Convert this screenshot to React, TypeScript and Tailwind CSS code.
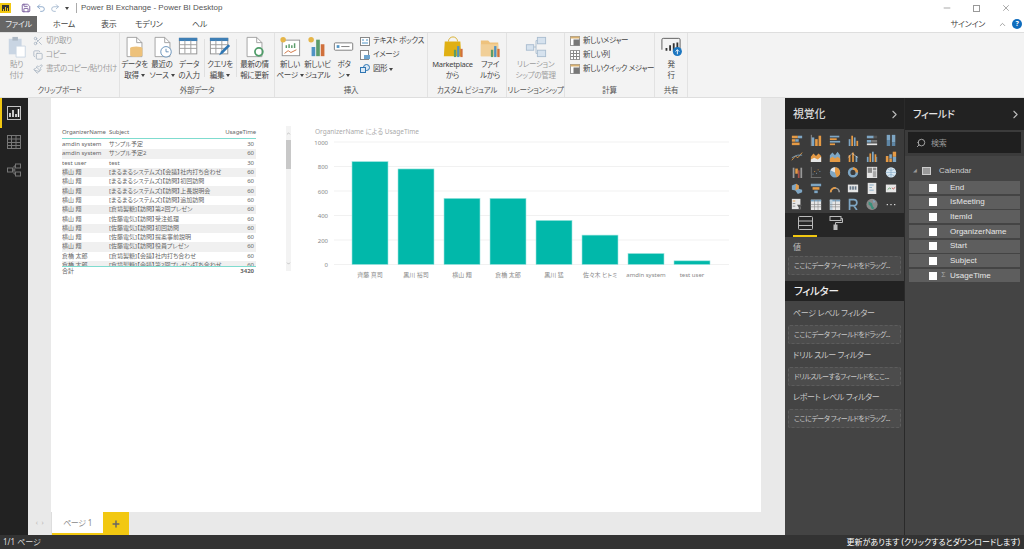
import type { ReactNode } from "react";
import { ChevronRight, ChevronUp, ChevronDown, Search, Minus, X, Plus, Scissors, Copy, Paintbrush, Save, Undo2, Redo2 } from "lucide-react";

const O = "#e59a45";
const B = "#7ea6c4";
const W = "#e6e6e6";

const rect = (x: number, y: number, w: number, h: number, fill: string) => (
  <rect key={`${x}-${y}-${w}-${h}`} x={x} y={y} width={w} height={h} fill={fill} />
);

const vizIcons: ReactNode[] = [
  <>{rect(1, 2, 7, 3, O)}{rect(8, 2, 5, 3, B)}{rect(1, 6, 4, 3, O)}{rect(5, 6, 4, 3, B)}{rect(1, 10, 9, 3, O)}</>,
  <>{rect(2, 4, 3, 10, B)}{rect(6, 6, 3, 8, O)}{rect(10, 2, 3, 12, O)}{rect(1, 1, 1, 13, "#999")}</>,
  <>{rect(1, 2, 11, 2, B)}{rect(1, 5, 8, 2, O)}{rect(1, 8, 12, 2, B)}{rect(1, 11, 6, 2, O)}</>,
  <>{rect(2, 6, 2, 8, B)}{rect(5, 2, 2, 12, O)}{rect(8, 4, 2, 10, B)}{rect(11, 8, 2, 6, O)}</>,
  <>{rect(1, 2, 8, 3, B)}{rect(9, 2, 4, 3, "#555")}{rect(1, 7, 5, 3, B)}{rect(6, 7, 7, 3, "#777")}{rect(1, 11, 12, 2, W)}</>,
  <>{rect(2, 1, 4, 6, B)}{rect(2, 7, 4, 7, "#5e86a5")}{rect(8, 1, 4, 9, B)}{rect(8, 10, 4, 4, "#5e86a5")}</>,
  <><path d="M1 12 5 7l3 2 5-6" fill="none" stroke={O} strokeWidth="1" /><path d="M1 9l4-2 3-1 5 0" fill="none" stroke={B} strokeWidth="1" /></>,
  <><path d="M1 14V8l3-4 3 3 3-3 3 3v7z" fill={O} /><path d="M1 14v-3l4-2 4 2 4-3v6z" fill={W} /></>,
  <><path d="M1 14V6l3-3 3 3 3-4 3 4v8z" fill={B} /><path d="M1 10l3-2 3 2 3-2 3 2v4H1z" fill={O} /></>,
  <>{rect(2, 6, 2, 8, O)}{rect(6, 3, 2, 11, O)}{rect(10, 7, 2, 7, B)}<path d="M1 9 6 4l7 5" fill="none" stroke={W} strokeWidth=".6" /></>,
  <>{rect(1, 8, 2, 6, B)}{rect(4, 4, 2, 10, O)}{rect(7, 2, 2, 12, B)}{rect(10, 5, 2, 9, O)}{rect(12, 8, 1, 6, B)}</>,
  <>{rect(1, 7, 3, 7, O)}{rect(5, 5, 3, 5, B)}{rect(5, 10, 3, 4, O)}{rect(9, 2, 4, 6, O)}{rect(9, 8, 4, 6, B)}</>,
  <>{rect(2, 2, 2, 12, "#999")}{rect(5, 3, 3, 6, O)}{rect(8, 5, 2, 9, "#a9534a")}{rect(11, 2, 2, 12, "#999")}</>,
  <>{rect(3, 9, 1, 1, B)}{rect(5, 6, 1, 1, O)}{rect(7, 8, 1, 1, B)}{rect(9, 4, 1, 1, O)}{rect(11, 6, 1, 1, B)}{rect(1, 1, 1, 13, "#777")}{rect(1, 13, 12, 1, "#777")}</>,
  <><circle cx="7" cy="7.5" r="6" fill={B} /><path d="M7 7.5V1.5a6 6 0 0 1 2 11.6z" fill={O} /><path d="M7 7.5 1.6 5A6 6 0 0 1 7 1.5z" fill={W} /></>,
  <><circle cx="7" cy="7.5" r="4.5" fill="none" stroke={B} strokeWidth="3" /><path d="M7 3a4.5 4.5 0 0 1 4.5 4.5" fill="none" stroke={O} strokeWidth="3" /></>,
  <>{rect(1, 1, 12, 13, W)}{rect(2, 2, 5, 6, "#8a8a8a")}{rect(8, 2, 4, 3, "#8a8a8a")}{rect(8, 6, 4, 7, "#a9a9a9")}</>,
  <><circle cx="7" cy="7.5" r="6" fill="#dbe9f2" /><path d="M1 7.5h12M7 1.5v12M3 3.5c3 2 5 2 8 0M3 11.5c3-2 5-2 8 0" stroke={B} fill="none" strokeWidth=".7" /></>,
  <><path d="M1 4 6 2l3 2v4l4 1v3l-5 2-3-4-4-1z" fill={B} /><path d="M6 2l3 2v4L5 10z" fill={O} /></>,
  <>{rect(1, 2, 12, 3, B)}{rect(3, 6, 8, 3, O)}{rect(5, 10, 4, 3, B)}</>,
  <><path d="M2 12a5 5 0 0 1 10 0" fill="none" stroke="#999" strokeWidth="2" /><path d="M2 12a5 5 0 0 1 6-5" fill="none" stroke={O} strokeWidth="2" /></>,
  <>{rect(1, 3, 12, 9, W)}{rect(3, 5, 2, 4, "#678")}{rect(6, 5, 2, 4, "#678")}{rect(9, 5, 2, 4, "#678")}</>,
  <>{rect(2, 1, 10, 13, W)}{rect(4, 3, 5, 1, B)}{rect(4, 6, 3, 1, B)}{rect(4, 9, 5, 1, B)}</>,
  <>{rect(1, 3, 12, 9, W)}<path d="M3 9l2-2 2 1" stroke="#5aa469" fill="none" /><path d="M8 7l2 1 2-2" stroke="#c0504d" fill="none" /></>,
  <>{rect(1, 1, 10, 12, W)}{rect(2, 3, 3, 1, O)}{rect(2, 6, 3, 1, "#888")}{rect(2, 9, 3, 1, "#888")}<path d="M7 8h6l-2 3v3H9v-3z" fill="#555" /></>,
  <>{rect(1, 2, 12, 12, W)}{rect(1, 2, 12, 2, B)}{rect(5, 2, 0.7, 12, "#888")}{rect(9, 2, 0.7, 12, "#888")}{rect(1, 7, 12, 0.7, "#888")}{rect(1, 10, 12, 0.7, "#888")}</>,
  <>{rect(1, 2, 12, 12, W)}{rect(1, 2, 12, 2, B)}{rect(1, 2, 3, 12, "#b9cddb")}{rect(7, 2, 0.7, 12, "#888")}{rect(1, 7, 12, 0.7, "#888")}{rect(1, 10, 12, 0.7, "#888")}</>,
  <path d="M3 14V2h5a3.5 3.5 0 0 1 0 7H3m5 0 3.5 5" fill="none" stroke={B} strokeWidth="2" />,
  <><circle cx="7" cy="7.5" r="6.5" fill="#8a8a8a" /><path d="M3 4l4 2 1 4 2 2-3 1-2-4-2-1z" fill="#3a8f7b" /><path d="M8 2l3 2-2 2z" fill={B} /></>,
  <>{rect(2, 7, 1.4, 1.4, W)}{rect(6.3, 7, 1.4, 1.4, W)}{rect(10.6, 7, 1.4, 1.4, W)}</>,
];

const rows = [
  ["amdin system", "サンプル予定", "30"],
  ["amdin system", "サンプル予定2", "60"],
  ["test user", "test", "30"],
  ["横山 翔", "[まるまるシステムズ]【会議】社内打ち合わせ", "60"],
  ["横山 翔", "[まるまるシステムズ]【訪問】初回訪問", "60"],
  ["横山 翔", "[まるまるシステムズ]【訪問】上長説明会", "60"],
  ["横山 翔", "[まるまるシステムズ]【訪問】追加訪問", "60"],
  ["横山 翔", "[倉境製糖]【訪問】第2回プレゼン", "60"],
  ["横山 翔", "[佐藤電気]【訪問】受注処理", "60"],
  ["横山 翔", "[佐藤電気]【訪問】初回訪問", "60"],
  ["横山 翔", "[佐藤電気]【訪問】提案事前説明", "60"],
  ["横山 翔", "[佐藤電気]【訪問】役員プレゼン", "60"],
  ["倉橋 太郎", "[倉境製糖]【会議】社内打ち合わせ", "60"],
  ["倉橋 太郎", "[倉境製糖]【会議】第2回プレゼン打ち合わせ", "60"],
];

const bars = [
  ["齊藤 真司", 840],
  ["黒川 裕司", 780],
  ["横山 翔", 540],
  ["倉橋 太郎", 540],
  ["黒川 猛", 360],
  ["佐々木 ヒトミ", 240],
  ["amdin system", 90],
  ["test user", 30],
] as const;

const fields = ["End", "IsMeeting", "ItemId", "OrganizerName", "Start", "Subject", "UsageTime"];

function Doc({ children }: { children?: ReactNode }) {
  return (
    <svg width="21" height="22" viewBox="0 0 24 25" fill="none">
      <path d="M3.5 1.5h11l6 6v16h-17z" fill="#fff" stroke="#9a9a9a" />
      <path d="M14.5 1.5v6h6" stroke="#9a9a9a" />
      {children}
    </svg>
  );
}

function GridIcon({ pen }: { pen?: boolean }) {
  return (
    <svg width="22" height="22" viewBox="0 0 24 24" fill="none">
      <rect x="1.5" y="2.5" width="19" height="17" fill="#fff" stroke="#8f8f8f" />
      <rect x="1" y="2" width="20" height="3.5" fill="#3f7fb5" />
      <path d="M1.5 9.5h19M1.5 13.5h19M7.5 5v14M14 5v14" stroke="#9a9a9a" />
      {pen && <path d="M11 21l2-4 8-8 2 2-8 8z" fill="#2f76b3" />}
    </svg>
  );
}

function NewPageIcon() {
  return (
    <svg width="22" height="22" viewBox="0 0 24 24" fill="none">
      <rect x="3.5" y="4.5" width="19" height="17" fill="#fff" stroke="#8f8f8f" />
      <circle cx="4.5" cy="4" r="3" fill="#e5b548" />
      <path d="M8 10v3M11 9v4M14 10v3M17 8v5" stroke="#5b9c6b" strokeWidth="1.6" />
      <path d="M6 19l4-3 3 2 6-3" stroke="#d0703c" />
    </svg>
  );
}

function NewVisualIcon() {
  return (
    <svg width="22" height="22" viewBox="0 0 24 24">
      <circle cx="4.5" cy="4" r="3" fill="#e5b548" />
      <rect x="5" y="12" width="4" height="10" fill="#4f93c4" />
      <rect x="10" y="4" width="4" height="18" fill="#5b9c6b" />
      <rect x="15" y="9" width="4" height="13" fill="#d0703c" />
    </svg>
  );
}

function FolderIcon({ market }: { market?: boolean }) {
  return (
    <svg width="22" height="22" viewBox="0 0 24 24">
      {market ? (
        <>
          <path d="M7 6a5 5 0 0 1 10 0" fill="none" stroke="#d8ae2a" />
          <path d="M3 6h17l1 16H2z" fill="#e0b013" />
        </>
      ) : (
        <>
          <path d="M2 5h8l2 2h9v15H2z" fill="#eec27d" />
          <path d="M2 9h19v13H2z" fill="#f1cf97" />
        </>
      )}
      <rect x="13" y="15" width="2.5" height="8" fill="#5b9c6b" />
      <rect x="16.5" y="11" width="2.5" height="12" fill="#4f93c4" />
      <rect x="20" y="14" width="2.5" height="9" fill="#d0703c" />
    </svg>
  );
}

function MeasureIcon({ table }: { table?: boolean }) {
  return (
    <svg width="10" height="10" viewBox="0 0 10 10" fill="none">
      <rect x=".5" y=".5" width="9" height="9" fill="#fff" stroke="#999" />
      {table ? (
        <path d="M.5 3.5h9M.5 6.5h9M3.5 .5v9M6.5 .5v9" stroke="#888" />
      ) : (
        <>
          <rect x=".5" y=".5" width="9" height="2" fill="#d9b272" />
          <rect x="3.5" y="3.5" width="6" height="6" fill="#777" />
        </>
      )}
    </svg>
  );
}

function BigButton({ icon, label, w, dim }: { icon: ReactNode; label: ReactNode; w: string; dim?: boolean }) {
  return (
    <div className={`flex flex-col items-center shrink-0 pt-[3px] ${w} ${dim ? "text-[#9c9c9c]" : "text-[#444]"}`}>
      <div className="h-[22px] flex items-center justify-center">{icon}</div>
      <div className="mt-[1px] text-center leading-[11px] whitespace-pre">{label}</div>
    </div>
  );
}

function Small({ icon, label, dim }: { icon: ReactNode; label: string; dim?: boolean }) {
  return (
    <div className={`h-[14px] flex items-center gap-[3px] whitespace-nowrap tracking-[-0.4px] ${dim ? "text-[#9c9c9c]" : "text-[#444]"}`}>
      {icon}
      {label}
    </div>
  );
}

function Group({ label, w, children }: { label: string; w: string; children: ReactNode }) {
  return (
    <div className={`${w} shrink-0 flex flex-col border-r border-[#e2e2e2]`}>
      <div className="h-[52px] flex items-start">{children}</div>
      <div className="h-[13px] text-center text-[#555] leading-[13px]">{label}</div>
    </div>
  );
}

function DropSlot({ label }: { label: string }) {
  return (
    <div className="mx-[3px] h-[19px] rounded-[2px] border border-dashed border-[#5c5c5c] bg-[#4c4c4c] px-[5px] text-[7px] tracking-[-0.5px] leading-[17px] text-[#c8c8c8] whitespace-nowrap">
      {label}
    </div>
  );
}

const Caret = () => <span className="inline-block ml-[2px] align-middle border-x-[2px] border-t-[3px] border-x-transparent border-t-[#444]" />;

export default function App() {
  return (
    <div className="w-[1024px] h-[549px] overflow-hidden flex flex-col bg-white font-['Noto_Sans','Noto_Sans_CJK_JP',sans-serif] [font-feature-settings:'palt'] text-[7.5px] tracking-[-0.3px]">
      {/* title bar */}
      <div className="h-[16px] shrink-0 flex items-center text-[#444]">
        <div className="w-[11px] h-[10px] bg-[#f2c811] flex items-center justify-center">
          <div className="w-[7px] h-[6px] bg-[#333] flex items-end justify-center gap-[1px]">
            <span className="w-[1px] h-[2px] bg-[#f2c811]" />
            <span className="w-[1px] h-[4px] bg-[#f2c811]" />
            <span className="w-[1px] h-[3px] bg-[#f2c811]" />
          </div>
        </div>
        <Save size={10} className="ml-[10px] text-[#6a4c93]" />
        <Undo2 size={10} className="ml-[5px] text-[#7f9fc4]" />
        <Redo2 size={10} className="ml-[4px] text-[#9fb4cc]" />
        <span className="ml-[5px] inline-block border-x-[2px] border-t-[3px] border-x-transparent border-t-[#444]" />
        <span className="ml-[7px] w-px h-[10px] bg-[#aaa]" />
        <span className="ml-[4px] text-[8px] tracking-normal font-['Liberation_Sans'] text-[#555]">Power BI Exchange - Power BI Desktop</span>
        <div className="ml-auto flex items-center gap-[21px] pr-[13px] text-[#999]">
          <Minus size={10} />
          <div className="w-[7px] h-[7px] border border-[#999]" />
          <X size={10} />
        </div>
      </div>
      {/* tabs */}
      <div className="h-[16px] shrink-0 flex items-stretch text-[8px] text-[#444] leading-[16px]">
        <div className="w-[37px] bg-[#666] text-[#eee] text-center">ファイル</div>
        <div className="w-[54px] bg-white text-center">ホーム</div>
        <div className="ml-[10px] w-[16px]">表示</div>
        <div className="ml-[18px] w-[32px]">モデリング</div>
        <div className="ml-[25px] w-[22px]">ヘルプ</div>
        <div className="ml-auto flex items-center pr-[2px]">
          <span className="text-[8px]">サインイン</span>
          <ChevronUp size={9} className="text-[#888] ml-[13px]" />
          <span className="ml-[5px] w-[10px] h-[10px] rounded-full bg-[#0f6cbd] text-white text-[7px] font-bold leading-[10px] text-center">?</span>
        </div>
      </div>
      {/* ribbon */}
      <div className="h-[66px] shrink-0 flex bg-[#f3f3f3] border-y border-[#dedede]">
        <Group label="クリップボード" w="w-[120px]">
          <BigButton
            w="w-[33px]"
            dim
            label={"貼り\n付け"}
            icon={
              <svg width="20" height="22" viewBox="0 0 20 24">
                <rect x="1" y="3" width="14" height="17" fill="#c9d5e3" />
                <rect x="5" y="1" width="6" height="4" fill="#aeb9c5" />
                <path d="M9 11h10v12H9z" fill="#fff" stroke="#c9d5e3" />
              </svg>
            }
          />
          <div className="pt-[1px] flex flex-col">
            <Small dim label="切り取り" icon={<Scissors size={10} className="text-[#a8b4c2]" />} />
            <Small dim label="コピー" icon={<Copy size={10} className="text-[#a8b4c2]" />} />
            <Small dim label="書式のコピー/貼り付け" icon={<Paintbrush size={10} className="text-[#a8b4c2]" />} />
          </div>
        </Group>
        <Group label="外部データ" w="w-[155px]">
          <BigButton
            w="w-[29px]"
            label={<>{"データを\n取得"}<Caret /></>}
            icon={
              <Doc>
                <ellipse cx="14" cy="14" rx="7" ry="2" fill="#edc17a" />
                <path d="M7 14v8c0 2.5 14 2.5 14 0v-8z" fill="#edc17a" />
              </Doc>
            }
          />
          <BigButton
            w="w-[26px]"
            label={<>{"最近の\nソース"}<Caret /></>}
            icon={
              <Doc>
                <circle cx="16" cy="18" r="6" fill="#fff" stroke="#5b89b3" />
                <path d="M16 14.5V18h3" stroke="#5b89b3" />
              </Doc>
            }
          />
          <BigButton w="w-[28px]" label={"データ\nの入力"} icon={<GridIcon />} />
          <div className="w-px h-[38px] bg-[#e0e0e0] mt-[6px] ml-[1px]" />
          <BigButton w="w-[30px]" label={<>{"クエリを\n編集"}<Caret /></>} icon={<GridIcon pen />} />
          <div className="w-px h-[38px] bg-[#e0e0e0] mt-[6px] ml-[1px]" />
          <BigButton
            w="w-[35px]"
            label={"最新の情\n報に更新"}
            icon={
              <Doc>
                <circle cx="17" cy="18" r="4.5" fill="none" stroke="#4f9d69" strokeWidth="2" />
              </Doc>
            }
          />
        </Group>
        <Group label="挿入" w="w-[153px]">
          <BigButton w="w-[30px]" label={<>{"新しい\nページ"}<Caret /></>} icon={<NewPageIcon />} />
          <BigButton w="w-[25px]" label={"新しいビ\nジュアル"} icon={<NewVisualIcon />} />
          <BigButton
            w="w-[28px]"
            label={<>{"ボタ\nン"}<Caret /></>}
            icon={
              <svg width="22" height="18" viewBox="0 0 24 18">
                <rect x="1.5" y="4.5" width="20" height="8" rx="1" fill="#fff" stroke="#777" />
                <rect x="4" y="7" width="3" height="3" fill="#4f93c4" />
                <path d="M9 8.5h9" stroke="#777" />
              </svg>
            }
          />
          <div className="pl-[2px] pt-[1px] flex flex-col">
            <Small
              label="テキスト ボックス"
              icon={
                <svg width="10" height="9" viewBox="0 0 10 9" fill="none">
                  <rect x=".5" y=".5" width="9" height="8" fill="#fff" stroke="#888" />
                  <path d="M2 3h2M6 3h2M2 6h6" stroke="#4f93c4" />
                </svg>
              }
            />
            <Small
              label="イメージ"
              icon={
                <svg width="10" height="10" viewBox="0 0 10 10" fill="none">
                  <rect x=".5" y=".5" width="8" height="9" fill="#fff" stroke="#888" />
                  <rect x="4" y="5" width="6" height="4" fill="#6fa5cf" />
                </svg>
              }
            />
            <div className="flex items-center">
              <Small
                label="図形"
                icon={
                  <svg width="10" height="10" viewBox="0 0 10 10" fill="#dbe9f5" stroke="#2f76b3">
                    <circle cx="6.5" cy="3.5" r="3" />
                    <rect x=".5" y="3.5" width="5" height="5" />
                  </svg>
                }
              />
              <Caret />
            </div>
          </div>
        </Group>
        <Group label="カスタム ビジュアル" w="w-[79px]">
          <BigButton w="w-[49px]" label={"Marketplace\nから"} icon={<FolderIcon market />} />
          <BigButton w="w-[26px]" label={"ファイ\nルから"} icon={<FolderIcon />} />
        </Group>
        <Group label="リレーションシップ" w="w-[58px]">
          <BigButton
            w="w-full"
            dim
            label={"リレーション\nシップの管理"}
            icon={
              <svg width="22" height="22" viewBox="0 0 24 24" fill="#d6e2ee" stroke="#a9bccf">
                <rect x="1.5" y="9.5" width="8" height="6" />
                <rect x="13.5" y="1.5" width="9" height="7" />
                <rect x="13.5" y="15.5" width="9" height="7" />
                <path d="M9.5 12H12V5h1.5M12 12v7h1.5" fill="none" />
              </svg>
            }
          />
        </Group>
        <Group label="計算" w="w-[90px]">
          <div className="pl-[5px] pt-[1px] flex flex-col">
            <Small label="新しいメジャー" icon={<MeasureIcon />} />
            <Small label="新しい列" icon={<MeasureIcon table />} />
            <Small label="新しいクイック メジャー" icon={<MeasureIcon />} />
          </div>
        </Group>
        <Group label="共有" w="w-[33px]">
          <BigButton
            w="w-full"
            label={"発\n行"}
            icon={
              <svg width="22" height="20" viewBox="0 0 24 22" fill="none">
                <path d="M2 14V3a1.5 1.5 0 0 1 1.5-1.5h17A1.5 1.5 0 0 1 22 3v10" stroke="#555" />
                <path d="M7 15v-3M11 15V9M15 15V7M19 13V6" stroke="#333" strokeWidth="2" />
                <circle cx="19" cy="16" r="5" fill="#1c76c0" />
                <path d="M19 19v-5M17 16l2-2 2 2" stroke="#fff" />
              </svg>
            }
          />
        </Group>
      </div>

      {/* body */}
      <div className="flex-1 min-h-0 flex">
        <div className="w-[28px] shrink-0 bg-[#222] flex flex-col">
          <div className="h-[30px] border-l-[2px] border-[#f2c811] flex items-center justify-center pr-[2px]">
            <svg width="14" height="14" viewBox="0 0 14 14" fill="none">
              <rect x=".5" y=".5" width="13" height="13" stroke="#c4c4c4" />
              <path d="M3 11V7M6 11V4M9 11V8M11.5 11V3" stroke="#fff" strokeWidth="1.5" />
            </svg>
          </div>
          <div className="h-[28px] flex items-center justify-center">
            <svg width="14" height="14" viewBox="0 0 14 14" fill="none" stroke="#777">
              <rect x=".5" y=".5" width="13" height="13" />
              <path d="M.5 4h13M.5 7.5h13M.5 10.5h13M4.5 .5v13M9 .5v13" />
            </svg>
          </div>
          <div className="h-[28px] flex items-center justify-center">
            <svg width="14" height="14" viewBox="0 0 14 14" fill="none" stroke="#777">
              <rect x=".5" y="5" width="5" height="4" />
              <rect x="8.5" y="1" width="5" height="4" />
              <rect x="8.5" y="9" width="5" height="4" />
              <path d="M5.5 7h3M7 3h1.5M7 11h1.5M7 3v8" />
            </svg>
          </div>
        </div>

        <div className="w-[757px] shrink-0 flex flex-col bg-[#e9e9e9]">
          <div className="flex-1 min-h-0 pl-[23px] pr-[24px]">
            <div className="h-full bg-white flex pl-[11px] pt-[28px] tracking-normal">
              {/* table */}
              <div className="w-[229px] shrink-0 flex">
                <div className="w-[194px] shrink-0 text-[6px] text-[#666]">
                  <div className="flex h-[13px] items-center border-b border-[#7fdccf] tracking-[-0.1px]">
                    <span className="w-[47px]">OrganizerName</span>
                    <span className="flex-1">Subject</span>
                    <span>UsageTime</span>
                  </div>
                  <div className="h-[127px] overflow-hidden pt-[1px]">
                    {rows.map((r, i) => (
                      <div key={i} className={`flex h-[9.3px] items-center leading-[9px] ${i % 2 === 1 ? "bg-[#f0f0f0]" : ""}`}>
                        <span className="w-[47px] shrink-0">{r[0]}</span>
                        <span className="flex-1 whitespace-nowrap">{r[1]}</span>
                        <span className="pr-[2px]">{r[2]}</span>
                      </div>
                    ))}
                  </div>
                  <div className="flex h-[10px] items-center border-t border-[#7fdccf] font-bold pr-[2px]">
                    <span className="flex-1 font-normal">合計</span>
                    <span>3420</span>
                  </div>
                </div>
                <div className="ml-[30px] w-[5px] h-[145px] bg-[#f3f3f3] flex flex-col justify-between items-center text-[#888]">
                  <div className="w-full flex flex-col items-center">
                    <ChevronUp size={5} className="mt-[5px]" />
                    <div className="bg-[#c8c8c8] w-full h-[29px] mt-[4px]" />
                  </div>
                  <ChevronDown size={5} className="mb-[5px]" />
                </div>
              </div>
              {/* chart */}
              <div className="ml-[21px]">
                <svg width="425" height="165" viewBox="0 0 425 165" className="block">
                  <text x="3" y="8" fontSize="6.5" fill="#aaa">OrganizerName による UsageTime</text>
                  {[0, 200, 400, 600, 800, 1000].map((v) => {
                    const y = 138.5 - v * 0.1225;
                    return (
                      <g key={v}>
                        <line x1="22" x2="417" y1={y} y2={y} stroke="#f1f1f1" />
                        <text x="16" y={y + 2.5} fontSize="6" fill="#888" textAnchor="end">{v}</text>
                      </g>
                    );
                  })}
                  {bars.map(([name, v], i) => (
                    <g key={name}>
                      <rect x={40 + i * 46} y={138.5 - v * 0.1225} width="36" height={v * 0.1225} fill="#01b8aa" stroke="#9fe5df" strokeWidth=".6" />
                      <text x={58 + i * 46} y="150.5" fontSize="6" fill="#888" textAnchor="middle">{name}</text>
                    </g>
                  ))}
                </svg>
              </div>
            </div>
          </div>
          <div className="h-[23px] shrink-0 flex">
            <div className="w-[24px] flex items-center justify-center gap-[4px] text-[7px] text-[#bbb] border-r border-[#ddd]">
              <span>‹</span>
              <span>›</span>
            </div>
            <div className="w-[51px] bg-white border-b-[2px] border-[#f2c811] text-center text-[8px] leading-[21px] text-[#888]">ページ 1</div>
            <div className="w-[26px] flex items-center justify-center bg-[#f2c811]">
              <Plus size={10} strokeWidth={3.5} className="text-[#666]" />
            </div>
          </div>
        </div>

        {/* visualizations */}
        <div className="w-[120px] shrink-0 flex flex-col bg-[#444] border-r border-[#2a2a2a]">
          <div className="h-[31px] shrink-0 bg-[#222] flex items-center justify-between pl-[8px] pr-[3px] pt-[1px] text-[11px] font-medium text-[#d8d8d8]">
            <span>視覚化</span>
            <ChevronRight size={13} className="text-[#bbb]" />
          </div>
          <div className="h-[84px] shrink-0 bg-[#3b3b3b] grid grid-cols-[repeat(6,18.7px)] auto-rows-[16px] pl-[3px] pt-[3px]">
            {vizIcons.map((icon, i) => (
              <div key={i} className="flex items-center justify-center">
                <svg width="12" height="12" viewBox="0 0 14 14" className="block">
                  {icon}
                </svg>
              </div>
            ))}
          </div>
          <div className="h-[24px] shrink-0 bg-[#262626] flex pl-[8px] gap-[12px]">
            <div className="w-[24px] border-b-[2px] border-[#f2c811] flex justify-center pt-[3px]">
              <svg width="15" height="14" viewBox="0 0 15 14" fill="none" stroke="#bbb">
                <rect x=".5" y=".5" width="14" height="13" rx="1" />
                <path d="M.5 5h14M.5 9.5h14" />
              </svg>
            </div>
            <div className="pt-[3px]">
              <svg width="14" height="14" viewBox="0 0 14 14" fill="none" stroke="#bbb">
                <rect x="1" y=".5" width="11" height="4" />
                <path d="M12 2.5h1.5v4H6.5V9" />
                <rect x="5" y="9" width="3" height="5" fill="#bbb" />
              </svg>
            </div>
          </div>
          <div className="h-[44px] shrink-0 pt-[3px]">
            <div className="pl-[8px] text-[8px] text-[#bdbdbd] h-[14px] leading-[14px] mb-[1.5px]">値</div>
            <DropSlot label="ここにデータ フィールドをドラッグ..." />
          </div>
          <div className="h-[20px] shrink-0 bg-[#222] pl-[9px] text-[10.5px] font-medium leading-[20px] text-[#eee]">フィルター</div>
          <div className="pt-[5px] flex flex-col">
            <div className="pl-[8px] h-[14px] text-[8px] leading-[14px] text-[#c8c8c8] mb-[4.5px]">ページ レベル フィルター</div>
            <DropSlot label="ここにデータ フィールドをドラッグ..." />
            <div className="pl-[8px] h-[14px] text-[8px] leading-[14px] text-[#c8c8c8] mt-[4.5px] mb-[4.5px]">ドリル スルー フィルター</div>
            <DropSlot label="ドリルスルーするフィールドをここ..." />
            <div className="pl-[8px] h-[14px] text-[8px] leading-[14px] text-[#c8c8c8] mt-[4.5px] mb-[4.5px]">レポート レベル フィルター</div>
            <DropSlot label="ここにデータ フィールドをドラッグ..." />
          </div>
        </div>

        {/* fields */}
        <div className="flex-1 min-w-0 flex flex-col bg-[#444]">
          <div className="h-[32px] shrink-0 bg-[#222] flex items-center justify-between pl-[8px] pr-[2px] pt-[1px] text-[10px] font-medium text-[#e4e4e4]">
            <span>フィールド</span>
            <ChevronRight size={13} className="text-[#bbb]" />
          </div>
          <div className="h-[26px] shrink-0 bg-[#3b3b3b] px-[3px] pt-[2px]">
            <div className="h-[21px] bg-[#1f1f1f] flex items-center gap-[5px] pl-[8px] text-[8px] text-[#999]">
              <Search size={10} className="-scale-x-100 text-[#bbb]" />
              検索
            </div>
          </div>
          <div className="flex items-center h-[25px] pt-[5px] pl-[8px] text-[8px] tracking-normal text-[#ccc] font-['Liberation_Sans']">
            <span className="text-[5px] text-[#999]">◢</span>
            <span className="ml-[5px] w-[9px] h-[8px] border border-[#ccc] bg-[#999] block" />
            <span className="ml-[8px]">Calendar</span>
          </div>
          <div className="flex flex-col gap-[1.7px] px-[4px]">
            {fields.map((f) => (
              <div key={f} className="h-[13px] bg-[#5e5e5e] flex items-center text-[8px] tracking-normal text-[#e6e6e6] font-['Liberation_Sans']">
                <span className="ml-[20px] w-[8px] h-[8px] bg-white shrink-0" />
                <span className="w-[13px] text-center text-[7px] text-[#aaa] shrink-0">{f === "UsageTime" ? "Σ" : ""}</span>
                {f}
              </div>
            ))}
          </div>
        </div>
      </div>

      {/* status bar */}
      <div className="h-[14px] shrink-0 bg-[#333] flex items-center justify-between px-[3px] text-[8px] tracking-normal text-[#ddd]">
        <span>1/1 ページ</span>
        <span className="pr-[1px] text-white">更新があります (クリックするとダウンロードします)</span>
      </div>
    </div>
  );
}
